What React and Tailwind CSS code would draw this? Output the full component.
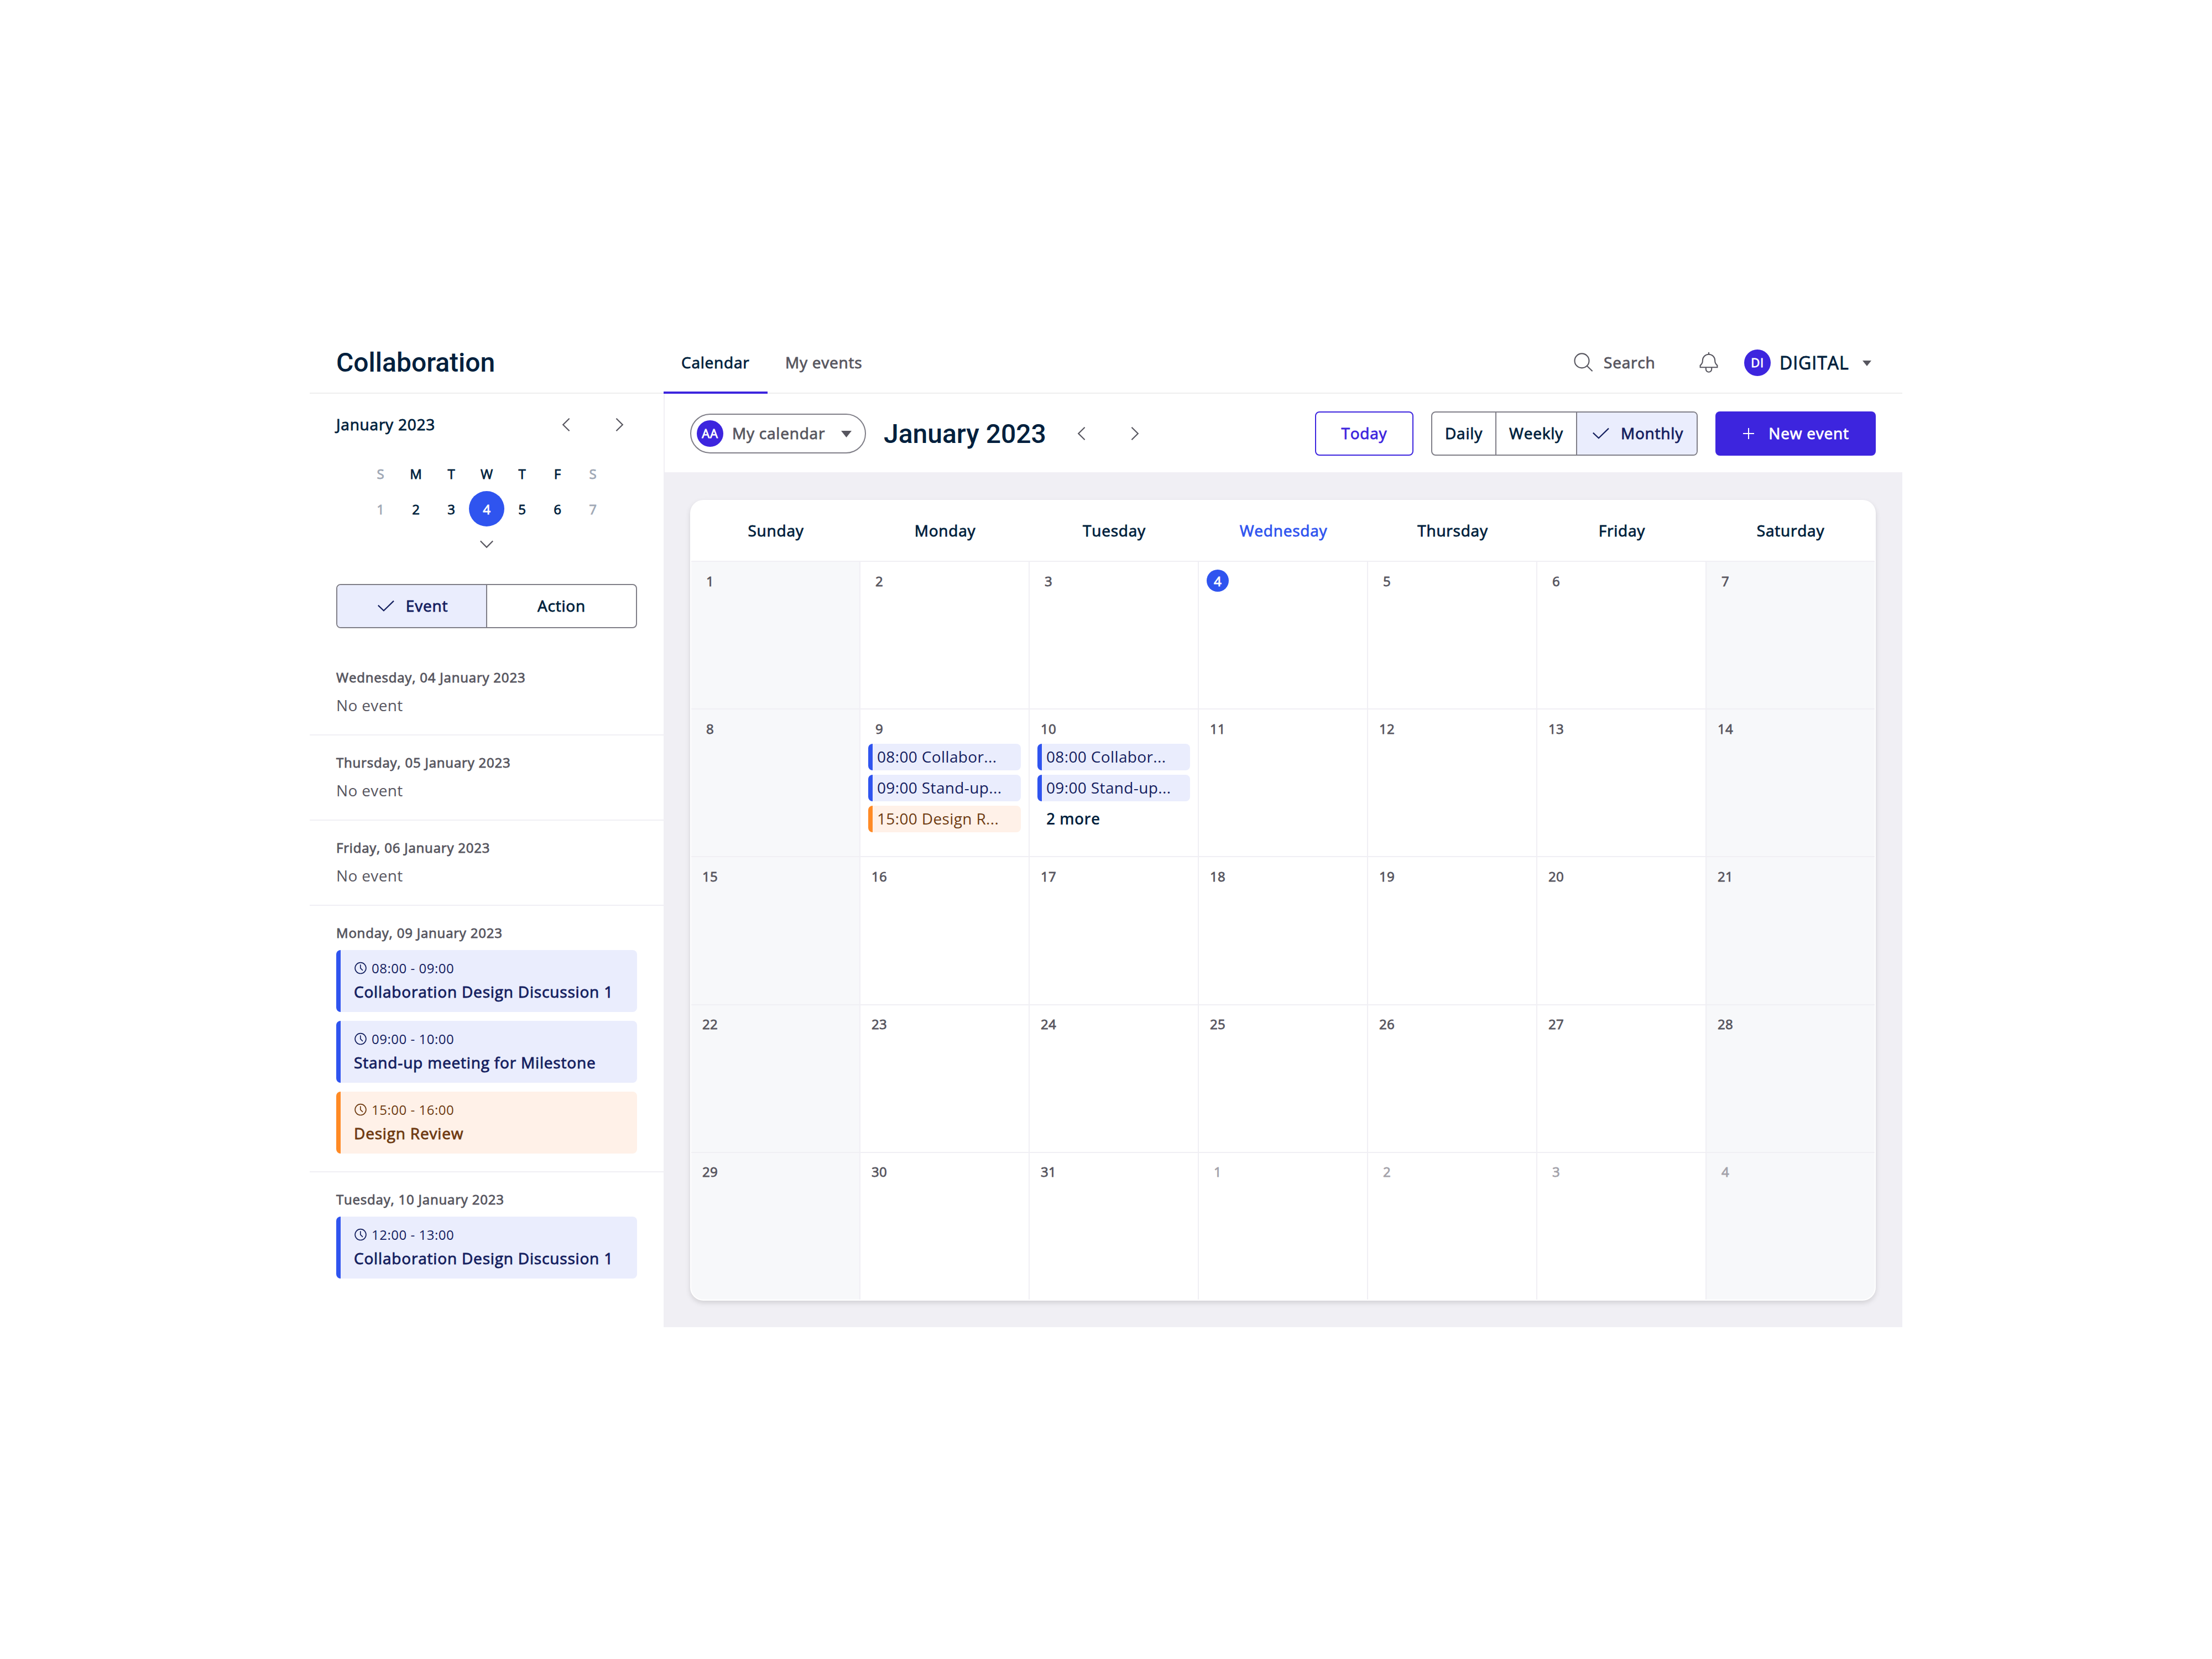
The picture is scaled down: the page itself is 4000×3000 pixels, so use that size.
const weekDays = ['Sunday', 'Monday', 'Tuesday', 'Wednesday', 'Thursday', 'Friday', 'Saturday']

const miniDays = [
  { letter: 'S', day: 1, muted: true },
  { letter: 'M', day: 2 },
  { letter: 'T', day: 3 },
  { letter: 'W', day: 4, today: true },
  { letter: 'T', day: 5 },
  { letter: 'F', day: 6 },
  { letter: 'S', day: 7, muted: true },
]

const agenda = [
  { date: 'Wednesday, 04 January 2023', events: [] },
  { date: 'Thursday, 05 January 2023', events: [] },
  { date: 'Friday, 06 January 2023', events: [] },
  {
    date: 'Monday, 09 January 2023',
    events: [
      { time: '08:00 - 09:00', title: 'Collaboration Design Discussion 1', tone: 'blue' },
      { time: '09:00 - 10:00', title: 'Stand-up meeting for Milestone', tone: 'blue' },
      { time: '15:00 - 16:00', title: 'Design Review', tone: 'orange' },
    ],
  },
  {
    date: 'Tuesday, 10 January 2023',
    events: [{ time: '12:00 - 13:00', title: 'Collaboration Design Discussion 1', tone: 'blue' }],
  },
]

const monthEvents = {
  9: [
    { label: '08:00 Collabor...', tone: 'blue' },
    { label: '09:00 Stand-up...', tone: 'blue' },
    { label: '15:00 Design R...', tone: 'orange' },
  ],
  10: [
    { label: '08:00 Collabor...', tone: 'blue' },
    { label: '09:00 Stand-up...', tone: 'blue' },
  ],
}

const moreCount = { 10: 2 }

const tones = {
  blue: 'border-[#2f54ef] bg-[#eaedfd] text-[#14205f]',
  orange: 'border-[#ff8a25] bg-[#fff1e8] text-[#6e3a11]',
}

// 5 weeks, the last one runs into February
const cells = Array.from({ length: 35 }, (_, i) => ({
  key: i,
  day: i < 31 ? i + 1 : i - 30,
  outside: i >= 31,
  weekend: i % 7 === 0 || i % 7 === 6,
  today: i === 3,
  lastCol: i % 7 === 6,
  lastRow: i >= 28,
}))

// Open Sans has no 500 cut here, so medium text is the regular one with a thin outline
const medium = 'font-normal [-webkit-text-stroke:0.85px_currentColor] tracking-[0.78px]'

function ChevronLeft() {
  return (
    <svg className="h-8 w-8" viewBox="0 0 32 32" fill="none" stroke="#57565f" strokeWidth="2.2">
      <path d="M21.6 4.8 10.2 16l11.4 11.2" />
    </svg>
  )
}

function ChevronRight() {
  return (
    <svg className="h-8 w-8" viewBox="0 0 32 32" fill="none" stroke="#57565f" strokeWidth="2.2">
      <path d="M10.4 4.8 21.8 16 10.4 27.2" />
    </svg>
  )
}

function Check() {
  return (
    <svg className="h-6 w-8 shrink-0" viewBox="0 0 32 24" fill="none" stroke="currentColor" strokeWidth="2.2">
      <path d="M1.8 10.6 11.9 20.3 30 2.6" />
    </svg>
  )
}

function Clock() {
  return (
    <svg className="h-6 w-6" viewBox="0 0 24 24" fill="none" stroke="currentColor" strokeWidth="1.7">
      <circle cx="12" cy="11.6" r="9.9" />
      <path d="M11.8 5.3v6.3l4.2 4.2" />
    </svg>
  )
}

function Search() {
  return (
    <svg className="h-9 w-9" viewBox="0 0 36 36" fill="none" stroke="#57565f" strokeWidth="2.1">
      <circle cx="14.5" cy="15.4" r="13" />
      <path d="m23.6 24.6 10 9.6" />
    </svg>
  )
}

function Bell() {
  return (
    <svg className="h-9 w-9 overflow-visible" viewBox="0 0 36 36" fill="none" stroke="#57565f" strokeWidth="2.1">
      <path d="M18 0v3.8" />
      <path d="M2.6 27.3v-3.5c2.8-2.4 4.2-4.3 4.2-7.8v-1a11.2 11.2 0 0 1 22.4 0v1c0 3.5 1.4 5.4 4.2 7.8v3.5z" />
      <path d="M12.8 27.5v3a5.2 5.2 0 0 0 10.4 0v-3" />
    </svg>
  )
}

function TopBar() {
  return (
    <header className="flex h-[112px] items-start border-b-2 border-[#eeeeee]">
      <div className="flex h-[110px] w-[640px] items-center pl-12">
        <h1 className="font-['Roboto',sans-serif] text-[48px] leading-[57px] font-medium tracking-normal [-webkit-text-stroke:0]">
          Collaboration
        </h1>
      </div>
      <nav className="flex h-[110px]">
        <a className="flex h-[112px] w-[188px] items-center border-b-4 border-[#3d25de] pt-[2px] pl-8">Calendar</a>
        <a className="flex h-[110px] items-center px-8 text-[#57565f]">My events</a>
      </nav>
      <div className="ml-auto flex h-[110px] items-center pr-14">
        <Search />
        <span className="ml-[18px] w-[93px] text-[#57565f]">Search</span>
        <span className="ml-[79px]">
          <Bell />
        </span>
        <span className="mt-[2px] ml-[46px] flex h-12 w-12 items-center justify-center rounded-full bg-[#3d25de] pb-[2px] text-[22px] leading-[30px] text-white">
          DI
        </span>
        <span className="ml-4 w-[125px] text-[32px] leading-[43px] tracking-[0.95px]">DIGITAL</span>
        <svg className="mt-[4px] ml-[25px] h-[10px] w-4" viewBox="0 0 16 10" fill="#57565f">
          <path d="M0 0h16L8 10z" />
        </svg>
      </div>
    </header>
  )
}

function EventCard({ time, title, tone }) {
  return (
    <div className={`h-[112px] rounded-lg border-l-8 pt-4 pl-6 ${tones[tone]}`}>
      <div className="flex items-center gap-2 text-[24px] leading-[33px] font-normal tracking-[0.52px] [-webkit-text-stroke:0]">
        <Clock />
        {time}
      </div>
      <p className="mt-[7px] tracking-[0.82px]">{title}</p>
    </div>
  )
}

function Sidebar() {
  return (
    <aside className="w-[640px]">
      <div className="flex h-[112px] items-center justify-between px-12">
        <span className="pb-[2px]">January 2023</span>
        <div className="flex gap-8">
          <button className="flex h-16 w-16 items-center justify-center">
            <ChevronLeft />
          </button>
          <button className="flex h-16 w-16 items-center justify-center">
            <ChevronRight />
          </button>
        </div>
      </div>

      <div className="mx-24 grid grid-cols-7 text-[24px] leading-[33px] tracking-normal">
        {miniDays.map((d, i) => (
          <div key={i} className={d.muted ? 'text-[#9fa8b5]' : ''}>
            <div className="flex h-16 items-center justify-center">{d.letter}</div>
            <div
              className={`flex h-16 w-16 items-center justify-center rounded-full ${d.today ? 'bg-[#2f54ef] text-white' : ''}`}
            >
              {d.day}
            </div>
          </div>
        ))}
      </div>
      <svg className="mx-auto mt-6 h-4 w-8" viewBox="0 0 32 16" fill="none" stroke="#57565f" strokeWidth="2.2">
        <path d="M4.8 2.2 16 13.6 27.2 2.2" />
      </svg>

      <div className="mx-12 mt-16 flex h-20 overflow-hidden rounded-lg border-2 border-[#7f7e87]">
        <button className="flex w-[271px] items-center justify-center gap-5 border-r-2 border-[#7f7e87] bg-[#eaedfd] pl-[3px] text-[#14205f]">
          <Check />
          <span className="pb-[2px]">Event</span>
        </button>
        <button className="flex-1 pb-[2px]">Action</button>
      </div>

      <div className="mt-10">
        {agenda.map((group) => (
          <section key={group.date} className="border-b-2 border-[#f0eff4] px-12 py-8 last:border-b-0">
            <h3 className="text-[24px] leading-[33px] tracking-[0.8px] text-[#57565f]">{group.date}</h3>
            <div className="mt-[15px] flex flex-col gap-4">
              {group.events.length === 0 && (
                <p className="h-10 font-normal tracking-[0.36px] text-[#57565f] [-webkit-text-stroke:0]">No event</p>
              )}
              {group.events.map((e) => (
                <EventCard key={e.time} {...e} />
              ))}
            </div>
          </section>
        ))}
      </div>
    </aside>
  )
}

function Toolbar() {
  return (
    <div className="flex h-[142px] items-start border-l-2 border-[#f0eff4] bg-white pt-8 pr-12 pl-[46px]">
      <button className="mt-1 flex h-[72px] w-[318px] items-center rounded-full border-2 border-[#7f7e87] pl-[10px] text-[#57565f]">
        <span className="flex h-12 w-12 items-center justify-center rounded-full bg-[#3d25de] pb-[2px] text-[22px] leading-[30px] text-white">
          AA
        </span>
        <span className="ml-4 w-[169px] pb-[2px] text-left">My calendar</span>
        <svg className="mt-[2px] ml-7 h-3 w-[19px]" viewBox="0 0 19 12" fill="#57565f">
          <path d="M0 0h19L9.5 12z" />
        </svg>
      </button>
      <h2 className="ml-8 flex h-20 items-center font-['Roboto',sans-serif] text-[48px] leading-[57px] font-medium tracking-normal [-webkit-text-stroke:0]">
        January 2023
      </h2>
      <div className="ml-8 flex h-20 items-center gap-8">
        <button className="flex h-16 w-16 items-center justify-center">
          <ChevronLeft />
        </button>
        <button className="flex h-16 w-16 items-center justify-center">
          <ChevronRight />
        </button>
      </div>

      <div className="ml-auto flex gap-8">
        <button className="h-20 w-[178px] rounded-lg border-2 border-[#3d25de] pb-[2px] text-[#3d25de]">Today</button>
        <div className="flex h-20 overflow-hidden rounded-lg border-2 border-[#7f7e87]">
          <button className="w-[116px] border-r-2 border-[#7f7e87] pb-[2px]">Daily</button>
          <button className="w-[146px] border-r-2 border-[#7f7e87] pb-[2px]">Weekly</button>
          <button className="flex w-[216px] items-center justify-center gap-5 bg-[#eaedfd] pl-[3px] text-[#14205f]">
            <Check />
            <span className="pb-[2px]">Monthly</span>
          </button>
        </div>
        <button className="flex h-20 w-[290px] items-center justify-center gap-6 rounded-lg bg-[#3d25de] text-white">
          <svg className="h-6 w-6" viewBox="0 0 24 24" fill="none" stroke="currentColor" strokeWidth="2">
            <path d="M12 2v20M2 12h20" />
          </svg>
          <span className="pb-[2px]">New event</span>
        </button>
      </div>
    </div>
  )
}

function DayCell({ cell }) {
  const events = monthEvents[cell.day] ?? []
  return (
    <div
      className={`min-w-0 border-[#f0eff4] px-[14px] pt-[14px] ${cell.weekend ? 'bg-[#f7f8fa]' : 'bg-white'} ${
        cell.lastCol ? '' : 'border-r-2'
      } ${cell.lastRow ? '' : 'border-b-2'}`}
    >
      <div
        className={`flex h-10 w-10 items-center justify-center rounded-full text-[24px] leading-[33px] tracking-[0.4px] ${
          cell.today ? 'bg-[#2f54ef] text-white' : cell.outside ? 'text-[#a3a2aa]' : 'text-[#57565f]'
        }`}
      >
        {cell.day}
      </div>
      {!cell.outside && events.length > 0 && (
        <div className="mt-2 flex flex-col gap-2 tracking-[0.36px] [-webkit-text-stroke:0]">
          {events.map((e) => (
            <div key={e.label} className={`flex h-12 items-center rounded-lg border-l-8 pb-[2px] pl-2 font-normal ${tones[e.tone]}`}>
              {e.label}
            </div>
          ))}
          {moreCount[cell.day] && (
            <div className="flex h-12 items-center pb-[2px] pl-4 font-semibold">{moreCount[cell.day]} more</div>
          )}
        </div>
      )}
    </div>
  )
}

function MonthGrid() {
  return (
    <div className="h-[1448px] rounded-3xl bg-white p-[2px] shadow-[0_4px_10px_rgba(0,0,0,0.13)]">
      <div className="overflow-hidden rounded-[22px]">
        <div className="grid h-[110px] grid-cols-[repeat(6,306px)_304px] border-b-2 border-[#f0eff4]">
          {weekDays.map((d) => (
            <div key={d} className={`flex items-center justify-center pb-[2px] ${d === 'Wednesday' ? 'text-[#2f54ef]' : ''}`}>
              {d}
            </div>
          ))}
        </div>
        <div className="grid h-[1334px] grid-cols-[repeat(6,306px)_304px] grid-rows-[repeat(4,267.2px)_265.2px]">
          {cells.map((c) => (
            <DayCell key={c.key} cell={c} />
          ))}
        </div>
      </div>
    </div>
  )
}

export default function App() {
  return (
    <div className="h-[3000px] w-[4000px] bg-white pt-[600px] pl-[560px]">
      <div
        className={`h-[1800px] w-[2880px] overflow-hidden font-['Open_Sans',sans-serif] text-[28px] leading-[38px] text-[#001f3d] ${medium}`}
      >
        <TopBar />
        <div className="flex h-[1688px]">
          <Sidebar />
          <main className="flex-1 bg-[#f0eff4]">
            <Toolbar />
            <div className="px-12 pt-[50px]">
              <MonthGrid />
            </div>
          </main>
        </div>
      </div>
    </div>
  )
}
